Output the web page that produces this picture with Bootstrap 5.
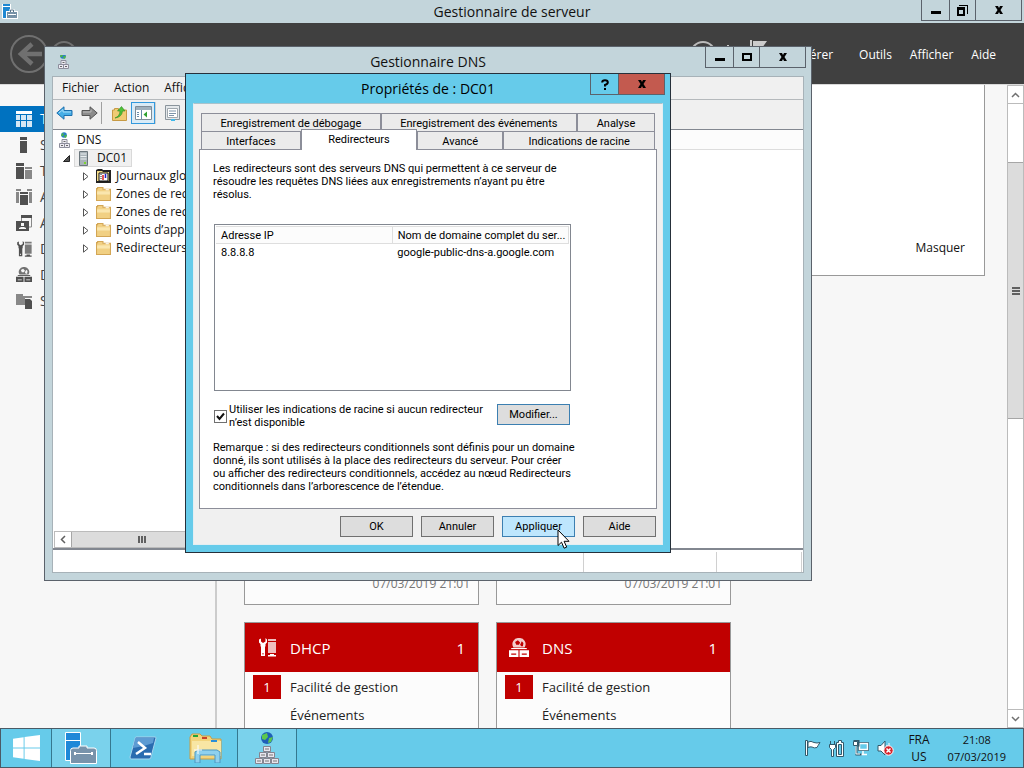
<!DOCTYPE html>
<html lang="fr">
<head>
<meta charset="utf-8">
<meta name="viewport" content="width=device-width, initial-scale=1">
<title>Gestionnaire de serveur</title>
<link href="https://cdn.jsdelivr.net/npm/bootstrap@5.3.0/dist/css/bootstrap.min.css" rel="stylesheet">
<style>
:root { --frame: #c3d5db; --sky: #66cbea; --edge: #5b626b; --rule: #828790; --face: #f0f0f0; }
body { font-family: "Open Sans", "Noto Sans", sans-serif; font-size: 12px; line-height: 18px; color: #111; background: #f7f7f7; overflow: hidden; }
button { font: inherit; color: inherit; background: none; border: 0; padding: 0; }
svg { display: block; flex: none; }
a { color: inherit; text-decoration: none; }

/* window chrome */
.titlebar { background: var(--frame); }
.titlebar .caption { font-size: 14px; line-height: 20px; }
.chrome-btns { position: absolute; top: 0; right: 2px; display: flex; border: 1px solid var(--edge); border-top: 0; }
.chrome-btns button { width: 26px; height: 20px; display: flex; align-items: center; justify-content: center; }
.chrome-btns button + button { border-left: 1px solid var(--edge); }
.chrome-btns .wide { width: 46px; }
.chrome-btns .first { width: 27px; }

/* server manager */
.sm-title { height: 23px; padding-top: 2px; }
.sm-head { height: 62px; background: #404040; color: #fff; border-bottom: 1px solid #d9d9d9; padding-right: 28px; }
.sm-tools { gap: 18px; padding-top: 2px; }
.sm-side { width: 217px; background: #f7f7f7; border-right: 2px solid #ccc; padding-top: 21px; }
.sm-side a { height: 26px; padding-left: 16px; gap: 8px; display: flex; align-items: center; font-size: 14px; color: #444; }
.sm-side a.on { background: #0072c0; color: #fff; }
.sm-main { padding: 0 22px 0 27px; background: #f7f7f7; }
.welcome { height: 191px; background: #fff; border: 1px solid #999; border-top: 0; padding: 0 19px 18px 0; }
.tile-row { gap: 17px; }
.tile { width: 235px; background: #fcfcfc; border: 1px solid #999; }
.tile-prev { height: 280px; margin: 49px 0 17px; color: #777; padding: 0 8px 11px 0; }
.tile-head { height: 49px; background: #c00000; color: #fff; font-size: 15px; padding: 0 13px 0 12px; gap: 13px; }
.tile-body { padding-top: 1px; }
.tile-line { height: 28px; font-size: 13px; color: #222; display: flex; align-items: center; padding-left: 8px; gap: 9px; }
.tile-line b { width: 28px; height: 24px; line-height: 24px; text-align: center; font-weight: 400; color: #fff; }
.tile-line b.hot { background: #c00000; }
.vbar { width: 17px; background: #fff; border: 1px solid #bbb; }
.vbar .arrow { height: 17px; display: flex; align-items: center; justify-content: center; background: #fff; }
.vbar .track { padding-top: 58px; border: solid #bbb; border-width: 1px 0; }
.vbar .thumb { height: 47%; background: #dcdcdc; border: solid #a6a6a6; border-width: 1px 0; }

/* taskbar */
.taskbar { height: 40px; background: var(--sky); border: 1px solid #4b5a66; position: relative; z-index: 5; color: #111; line-height: 17px; }
.task { width: 63px; display: flex; align-items: center; justify-content: center; }
.task.start { width: 50px; }
.task.open { width: 60px; background: #7ad2ec; border: solid #35788f; border-width: 0 1px; }
.tray { gap: 8px; padding-right: 17px; }
.clock { font-size: 11px; margin-left: 10px; }
.lang { margin-left: 6px; }

/* DNS console */
.dns { position: absolute; left: 44px; top: 46px; width: 75%; bottom: 187px; background: var(--frame); border: 1px solid var(--edge); padding: 0 7px 7px; }
.dns .titlebar { height: 29px; padding-top: 5px; }
.dns > .chrome-btns { right: 5px; }
.dns-client { background: #fff; border: 1px solid #a7b2b8; }
.dns-menu { height: 23px; background: var(--face); border-bottom: 1px solid #b5b9bc; gap: 15px; padding-left: 9px; }
.dns-tools { height: 30px; background: var(--face); border-bottom: 1px solid var(--rule); padding: 0 0 3px 3px; }
.dns-tools .sep { width: 1px; height: 22px; background: #a0a0a0; margin: 0 5px 0 3px; }
.dns-tools .sep.thin { opacity: .4; margin: 0 4px 0 0; }
.tool { width: 24px; height: 22px; display: flex; align-items: center; justify-content: center; }
.tool.on { border: 1px solid #3399dd; background: #d9ebf7; }
.tree { width: 240px; border: solid var(--rule); border-width: 0 1px 1px 0; overflow: hidden; padding: 1px 0 0 1px; white-space: nowrap; }
.node { height: 18px; display: flex; align-items: center; gap: 4px; }
.node.root { padding-left: 3px; }
.node.server { padding-left: 9px; }
.node.kid { padding-left: 29px; }
.node.kid svg + svg { margin: 0 1px 0 3px; }
.node .sel { background: #f0f0f0; border: 1px solid #d9d9d9; height: 18px; padding: 0 4px; display: flex; align-items: center; gap: 9px; }
.hbar { height: 17px; border: 1px solid #bbb; }
.hbar .arrow { width: 16px; display: flex; align-items: center; justify-content: center; }
.hbar .thumb { width: 142px; background: #dcdcdc; border: solid #a6a6a6; border-width: 0 1px; display: flex; align-items: center; justify-content: center; }
.list-head { height: 20px; background: #fcfcfc; border-bottom: 1px solid #ddd; }
.list-pane { border-bottom: 1px solid var(--rule); }
.dns-status { height: 23px; border-top: 1px solid var(--rule); padding: 2px 1px 0 0; }
.dns-status span { border-right: 1px solid #d0d0d0; }
.dns-status .cell-a { width: 133px; }
.dns-status .cell-b { width: 85px; }

/* properties dialog */
.props { position: absolute; left: 185px; top: 73px; width: 486px; background: var(--sky); border: 1px solid #26303a; padding: 0 7px 7px; font-family: Roboto, "Open Sans", sans-serif; font-size: 11px; line-height: 13px; color: #000; }
.props .titlebar { height: 29px; padding-top: 5px; background: none; font-family: "Open Sans", "Noto Sans", sans-serif; }
.props .chrome-btns { right: 5px; }
.props .close-btn { background: #c35a4f; }
.props-client { background: var(--face); border: 1px solid #e3eef2; border-top-color: #a9c3cc; padding: 9px 5px 7px; }
.tabs-line { display: flex; margin: 0 2px; }
.tabs-line button { height: 18px; border: 1px solid #8c8e99; border-bottom: 0; background: #ebebeb; flex-shrink: 0; padding-top: 1px; }
.tabs-line .on { background: #fff; height: 21px; margin: -2px 0 -1px; padding: 0 0 2px; position: relative; }
.tab-page { background: #fff; border: 1px solid #8c8e99; padding: 12px 84px 15px 13px; white-space: nowrap; }
.servers { height: 167px; border: 1px solid var(--rule); margin: 23px 1px 12px 1px; padding: 1px; }
.servers table { width: 100%; table-layout: fixed; }
.servers th { font-weight: 400; height: 17px; background: #fcfcfc; border: solid #dedede; border-width: 1px 1px 1px 0; padding: 0 5px; overflow: hidden; }
.servers td { height: 17px; padding: 0 5px; }
.tick { appearance: none; width: 13px; height: 13px; flex: none; margin: 0; border: 1px solid #707070; background: #fff url("data:image/svg+xml,%3Csvg xmlns='http://www.w3.org/2000/svg' viewBox='0 0 11 11'%3E%3Cpath d='M2 5l2.500 3L9 2.500' fill='none' stroke='%23111' stroke-width='2'/%3E%3C/svg%3E") center/11px; }
.root-hints { padding: 0 2px 0 1px; margin-bottom: 8px; }
.root-hints .choice { gap: 2px; }
.push { width: 73px; height: 21px; background: #ddd; border: 1px solid #707070; flex: none; }
.push.def { border-color: #3c7fb1; margin-top: 1px; }
.push.hot { background: #bee6fd; border-color: #3c7fb1; }
.dlg-actions { padding: 7px 1px 0 0; }
.pointer { position: absolute; left: 371px; top: 455px; }
</style>
</head>
<body class="vh-100 d-flex flex-column">

<svg width="0" height="0" class="position-absolute">
  <defs>
    <symbol id="i-min" viewBox="0 0 12 10"><path d="M1 6h10v3H1z"/></symbol>
    <symbol id="i-max" viewBox="0 0 12 10"><path d="M1 1h10v8H1zM3 3v4h6V3z" fill-rule="evenodd"/></symbol>
    <symbol id="i-x" viewBox="0 0 10 10"><path d="M1 1h3l1 2 1-2h3L6.500 5 9 9H6L5 7 4 9H1l2.500-4z"/></symbol>
    <symbol id="i-dns" viewBox="0 0 16 16">
      <circle cx="7" cy="3" r="2.800" fill="#2a7fc4"/><path d="M5 1l2 1-1 2H4zM8 3l2 0-1 3-2-1z" fill="#4cb648"/>
      <path d="M5 7.500h5v4H5zM2.500 11.500h5v4h-5zM7.500 11.500h5v4h-5z" fill="#eceaf2" stroke="#8d8e9c"/>
      <path d="M6.500 9.500h2M4 13.500h2M9 13.500h2" stroke="#666" />
    </symbol>
    <symbol id="i-folder" viewBox="0 0 14 13">
      <path d="M.5 12.500V1.500h1V.5h5v1.500h7v10.500z" fill="#f1d083" stroke="#d3a655"/><path d="M1 4h12v3H1z" fill="#fae6ae"/><path d="M9 2h3v1H9z" fill="#fff"/>
    </symbol>
    <symbol id="i-tri" viewBox="0 0 6 9"><path d="M.5.8v7.400L5 4.500z" fill="#fff" stroke="#555"/></symbol>
    <symbol id="i-tools" viewBox="0 0 18 20">
      <path d="M1 1.500v3L2.500 6v2L3 9v9h4V9l.5-1V6L9 4.500v-3L7.500 0v3.500L5 5 3 3.500V.5zM4.500 15h1v1.500h-1z" fill-rule="evenodd"/>
      <path d="M10 1h8v2h-8zM10 4h8v11h-8z" opacity=".75"/><path d="M12 16h4v1h2v1.500h-8V17h2z"/>
    </symbol>
    <symbol id="i-globe" viewBox="0 0 18 18">
      <path d="M9 0a5.500 5.500 0 0 1 5 8.500H4A5.500 5.500 0 0 1 9 0zM5.500 3.500l1 2.500h2.500l1-2-2-2zM10 6l1 1.500h1.500l.5-3-1.500-1.500z" fill-rule="evenodd" opacity=".8"/>
      <path d="M0 11h8.500v6H0zM9.500 11H18v6H9.500zM2 14v1h4.500v-1zM11.500 14v1H16v-1z" fill-rule="evenodd"/><path d="M2 9h14v1H2z"/>
    </symbol>
  </defs>
</svg>

<!-- Gestionnaire de serveur -->
<header class="titlebar sm-title position-relative text-center flex-shrink-0">
  <svg class="position-absolute top-0 start-0 mt-1" width="20" height="16" viewBox="-2 1 20 16"><path d="M.5.500h8v15h-8z" fill="#1e88d2" stroke="#fff"/><path d="M0 3h9v1H0z" fill="#fff"/><path d="M4 8h3.500V6h5v2H16v8H4z" fill="#fff"/><path d="M5 9h10v6H5z" fill="#7893a8"/><path d="M8.500 9V7h3v2M7.500 10.500v2M12.500 10.500v2" fill="none" stroke="#58748a"/><path d="M6 11.500h8" stroke="#fff"/></svg>
  <div class="caption">Gestionnaire de serveur</div>
  <div class="chrome-btns">
    <button class="first" aria-label="Réduire"><svg width="12" height="10"><use href="#i-min"/></svg></button>
    <button aria-label="Restaurer"><svg width="11" height="11" viewBox="0 0 11 11"><path d="M0 2h8v9H0zM2 5v4h4V5zM2 0h9v9h-1V1H2z" fill-rule="evenodd"/></svg></button>
    <button class="wide" aria-label="Fermer"><svg width="10" height="10"><use href="#i-x"/></svg></button>
  </div>
</header>

<div class="sm-head d-flex align-items-center flex-shrink-0 overflow-hidden">
  <svg width="90" height="60" viewBox="1 1 90 60" fill="none" stroke="#707070"><circle cx="30" cy="31" r="18" stroke-width="2"/><path d="M43 31H22M33 21L22 31l11 10" stroke-width="4.500"/><circle cx="65" cy="31" r="12" stroke-width="2"/></svg>
  <svg class="ms-auto me-4" width="90" height="60" viewBox="0 0 90 60"><circle cx="16" cy="30" r="12" fill="none" stroke="#bbb" stroke-width="2"/><path d="M40 21h2v2h-2z" fill="#ccc"/><path d="M63 16h2v28h-2zM66 17h14l-5 7 5 7H66z" fill="#ccc"/></svg>
  <nav class="d-flex sm-tools">
    <a href="#" class="me-2">Gérer</a><a href="#">Outils</a><a href="#">Afficher</a><a href="#">Aide</a>
  </nav>
</div>

<div class="d-flex flex-grow-1 overflow-hidden">
  <nav class="sm-side flex-shrink-0">
    <a href="#" class="on"><svg width="16" height="16" viewBox="0 0 16 16"><path d="M0 0h16v3H0z" fill="#fff"/><path d="M0 4h4v5H0zM5 4h5v5H5zM11 4h5v5h-5zM0 10h4v6H0zM5 10h5v6H5zM11 10h5v6h-5z" fill="#d5e8f5"/></svg>Tableau de bord</a>
    <a href="#"><svg width="16" height="16" viewBox="0 0 16 16" fill="#505050"><path d="M4 0h7v3H4zM4 4h7v12H4z"/></svg>Serveur local</a>
    <a href="#"><svg width="16" height="16" viewBox="0 0 16 16" fill="#505050"><path d="M0 0h8v3H0zM0 4h8v12H0z"/><path d="M9 4h7v2H9zM9 7h7v9H9z" fill="#888"/></svg>Tous les serveurs</a>
    <a href="#"><svg width="16" height="16" viewBox="0 0 16 16" fill="#505050"><path d="M4 3h8v2H4zM4 6h8v10H4z"/><path d="M0 0h5v2H0zM0 3h3v11H0zM11 0h5v2h-5zM13 3h3v11h-3z" fill="#888"/></svg>AD CS</a>
    <a href="#"><svg width="16" height="16" viewBox="0 0 16 16" fill="#505050"><path d="M5 0h11v3H5z"/><path d="M5.500 3v3M15.500 3v9H13" fill="none" stroke="#888"/><path d="M0 6h13v10H0zM5 8v3h3V8zM3 14h7v-1l-2-1H5l-2 1z" fill-rule="evenodd"/></svg>AD DS</a>
    <a href="#"><svg width="16" height="17" fill="#505050"><use href="#i-tools"/></svg>DHCP</a>
    <a href="#"><svg width="16" height="16" fill="#505050"><use href="#i-globe"/></svg>DNS</a>
    <a href="#" class="text-nowrap overflow-hidden"><svg width="16" height="16" viewBox="0 0 16 16" fill="#888"><path d="M0 1h7v2h9v2H9v7H0z"/><path d="M9 6h5l2 2v8H9z" fill="#505050"/></svg>Services de fichiers</a>
  </nav>

  <main class="sm-main flex-grow-1 overflow-hidden">
    <section class="welcome d-flex justify-content-end align-items-end"><a href="#">Masquer</a></section>
    <div class="d-flex tile-row">
      <div class="tile tile-prev d-flex align-items-end justify-content-end">07/03/2019 21:01</div>
      <div class="tile tile-prev d-flex align-items-end justify-content-end">07/03/2019 21:01</div>
    </div>
    <div class="d-flex tile-row">
      <section class="tile">
        <div class="tile-head d-flex align-items-center"><svg width="20" height="20" fill="#fff"><use href="#i-tools"/></svg><span>DHCP</span><span class="ms-auto">1</span></div>
        <div class="tile-body">
          <div class="tile-line"><b class="hot">1</b><a href="#">Facilité de gestion</a></div>
          <div class="tile-line"><b></b><a href="#">Événements</a></div>
        </div>
      </section>
      <section class="tile">
        <div class="tile-head d-flex align-items-center"><svg width="20" height="20" fill="#fff"><use href="#i-globe"/></svg><span>DNS</span><span class="ms-auto">1</span></div>
        <div class="tile-body">
          <div class="tile-line"><b class="hot">1</b><a href="#">Facilité de gestion</a></div>
          <div class="tile-line"><b></b><a href="#">Événements</a></div>
        </div>
      </section>
    </div>
  </main>

  <div class="vbar d-flex flex-column flex-shrink-0">
    <span class="arrow"><svg width="9" height="6" viewBox="0 0 9 6"><path d="M1 5l3.500-3.500L8 5" fill="none" stroke="#707070" stroke-width="1.500"/></svg></span>
    <div class="track flex-grow-1"><div class="thumb d-flex align-items-center justify-content-center"><svg width="8" height="8" viewBox="0 0 8 8"><path d="M0 0h8v2H0zM0 3h8v2H0zM0 6h8v2H0z" fill="#606060"/></svg></div></div>
    <span class="arrow"><svg width="9" height="6" viewBox="0 0 9 6"><path d="M1 1l3.500 3.500L8 1" fill="none" stroke="#707070" stroke-width="1.500"/></svg></span>
  </div>
</div>

<!-- Barre des tâches -->
<footer class="taskbar d-flex flex-shrink-0">
  <button class="task start" aria-label="Démarrer"><svg width="27" height="26" viewBox="0 0 28 27" fill="#fff"><path d="M0 4l11-1.600V13H0zM12 2.200L28 0v13H12zM0 14h11v10.600L0 23zM12 14h16v13l-16-2.200z"/></svg></button>
  <button class="task open" aria-label="Gestionnaire de serveur"><svg width="34" height="34" viewBox="0 0 34 34"><path d="M1.500 1.500h15v28h-15z" fill="#1e88d8" stroke="#fff"/><path d="M2 9.500h14" stroke="#fff"/><path d="M6.500 19.500q0-2.500 2.500-2.500h6v-2h8v2h7q2.500 0 2.500 2.500v13h-26z" fill="#7893ab" stroke="#fff"/><path d="M10 22.500h19" stroke="#fff"/><path d="M10 21h2v3h-2zM27 21h2v3h-2z" fill="#fff"/></svg></button>
  <button class="task" aria-label="Windows PowerShell"><svg width="28" height="24" viewBox="0 0 28 24"><path d="M7 1h19q1 0 1 1l-5 19q0 2-2 2H2q-1 0-1-2L6 3q0-2 1-2z" fill="#2a6cb0" stroke="#a8d4ee"/><path d="M7 2h18l-1 5Q14 11 4 12L6 3z" fill="#5d9bd3"/><path d="M9 6l7 6-9 6M15 18h7" fill="none" stroke="#fff" stroke-width="2.500"/></svg></button>
  <button class="task" aria-label="Explorateur de fichiers"><svg width="34" height="30" viewBox="0 0 34 30"><path d="M1 26V4l2-3h8l2 2h8l2 3h9v20z" fill="#f2d47c" stroke="#c99c44"/><path d="M3 8h29v15H3z" fill="#f8e6a4"/><path d="M4 2h5v2H4z" fill="#22a53a"/><path d="M13 4h5v2h-5z" fill="#c9432b"/><path d="M22 7h6v2h-6z" fill="#2a8fd8"/><path d="M6 30V19l3-2h19l3 2v11h-5v-8H11v8z" fill="#8ed0ee" stroke="#4c98c2"/><path d="M9 12v9M5 17h8" stroke="#fff"/></svg></button>
  <button class="task open" aria-label="DNS"><svg width="26" height="32" viewBox="0 0 26 32"><circle cx="13" cy="6" r="6" fill="#1f5fb8"/><path d="M8 3l5-2 1 4-3 3-3-1zM15 6l4-1-2 5-3 1z" fill="#5cc84c"/><g fill="#e8e6ee" stroke="#85848f"><path d="M9.500 14.500h7v5h-7zM5.500 20.500h7v5h-7zM13.500 20.500h7v5h-7zM1.500 26.500h7v5h-7zM9.500 26.500h7v5h-7zM17.500 26.500h7v5h-7z"/></g><path d="M11 17h4M7 23h4M15 23h4M3 29h4M11 29h4M19 29h4" stroke="#777"/></svg></button>
  <div class="tray d-flex align-items-center ms-auto">
    <svg width="17" height="16" viewBox="0 0 17 16"><path d="M1.500.500h2v15h-2z" fill="#fff" stroke="#31596b"/><path d="M4 2q3-1.500 6 .5 3 1 6 0-2 3-3 5-3 1-5-.5-2-.5-4 .5z" fill="#fff" stroke="#31596b"/></svg>
    <svg width="16" height="17" viewBox="0 0 16 17"><path d="M7.500 2.500h2v-2h3v2h2v14h-7z" fill="#fff" stroke="#31596b"/><path d="M9.500 4.500h3v10h-3z" fill="#66cbea" stroke="#31596b"/><path d="M.5 4.500h6v3l-2 2v7h-2v-7l-2-2zM1.500 4V1M5.500 4V1" fill="#fff" stroke="#31596b"/></svg>
    <svg width="16" height="16" viewBox="0 0 16 16"><path d="M5.500 2.500h10v8h-10z" fill="#66cbea" stroke="#31596b"/><path d="M6.500 3.500h8v6h-8zM10 11v3M7 14.500h7" fill="none" stroke="#fff" stroke-width="1.500"/><path d="M.5.500h5v5h-2v9h5" fill="none" stroke="#31596b" stroke-width="2"/><path d="M.5 1.500h4v4h-4z" fill="#fff" stroke="#31596b"/><path d="M3 6v8h4" fill="none" stroke="#fff"/></svg>
    <svg width="17" height="16" viewBox="0 0 17 16"><path d="M1 5.500h3l4-4.500v14l-4-4H1z" fill="#fff" stroke="#31596b"/><path d="M10 5v4M12 3v4" stroke="#fff"/><circle cx="11.500" cy="10.500" r="4.700" fill="#d6232b" stroke="#fff"/><path d="M9.500 8.500l4 4M13.500 8.500l-4 4" stroke="#fff" stroke-width="1.500"/></svg>
    <div class="text-center lang">FRA<br>US</div>
    <div class="text-center clock">21:08<br>07/03/2019</div>
  </div>
</footer>

<!-- Gestionnaire DNS -->
<section class="dns d-flex flex-column">
  <div class="titlebar position-relative text-center flex-shrink-0">
    <svg class="position-absolute top-0 start-0 mt-2" width="26" height="16" viewBox="-4 2 26 16"><use href="#i-dns" width="16" height="16"/></svg>
    <div class="caption">Gestionnaire DNS</div>
  </div>
  <div class="chrome-btns">
    <button class="first" aria-label="Réduire"><svg width="12" height="10"><use href="#i-min"/></svg></button>
    <button aria-label="Agrandir"><svg width="12" height="10"><use href="#i-max"/></svg></button>
    <button class="wide" aria-label="Fermer"><svg width="10" height="10"><use href="#i-x"/></svg></button>
  </div>
  <div class="dns-client flex-grow-1 d-flex flex-column overflow-hidden">
    <nav class="dns-menu d-flex align-items-center"><button>Fichier</button><button>Action</button><button>Affichage</button></nav>
    <div class="dns-tools d-flex align-items-center">
      <svg class="me-2" width="17" height="14" viewBox="0 0 17 14"><path d="M.8 7L8 .8v3.700h8v5H8v3.700z" fill="#46aee6" stroke="#1c6fae"/><path d="M3 7l4-3.500V6h8" fill="none" stroke="#a5dcf7"/></svg>
      <svg width="17" height="14" viewBox="0 0 17 14"><path d="M16.200 7L9 .8v3.700H1v5h8v3.700z" fill="#8c8c8c" stroke="#555"/><path d="M2 6h8V3.500" fill="none" stroke="#bbb"/></svg>
      <span class="sep"></span>
      <button class="tool" aria-label="Dossier parent"><svg width="15" height="15" viewBox="0 0 15 15"><path d="M.5 14.500V4h2V2.500h4V4h8v10.500z" fill="#f0cb74" stroke="#c79a44"/><path d="M3 12q5-2 5-7H5.500L9.500.500 13 5h-2.500Q10 11 3 12z" fill="#4fc138" stroke="#2f8a22" stroke-width=".6"/></svg></button>
      <button class="tool on" aria-label="Arborescence de la console"><svg width="17" height="14" viewBox="0 0 17 14"><path d="M.5.500h16v13H.5z" fill="#fff" stroke="#7f8c98"/><path d="M1 1h15v3H1z" fill="#9fb0bd"/><path d="M6.500 4v9M2 6.500h2M2 8.500h2M2 10.500h2" stroke="#6a8bab"/><path d="M12 5.500v6L8.500 8.500z" fill="#2fa12f"/></svg></button>
      <span class="sep thin"></span>
      <button class="tool" aria-label="Propriétés"><svg width="15" height="17" viewBox="0 0 15 17"><path d="M.5.500h14v14H.5z" fill="#e4e8eb" stroke="#8a949c"/><path d="M2.500 3.500h10v9h-10z" fill="#fff" stroke="#a0a8ae"/><path d="M4 6h7M4 8.500h7M4 10.500h5" stroke="#7d94aa"/><path d="M6 14h4v2H6z" fill="#3fb8ea"/></svg></button>
    </div>
    <div class="d-flex flex-grow-1">
      <div class="tree d-flex flex-column flex-shrink-0">
        <div class="node root"><svg width="16" height="16"><use href="#i-dns"/></svg><span>DNS</span></div>
        <div class="node server"><svg width="7" height="7" viewBox="0 0 7 7"><path d="M6.500.500v6h-6z" fill="#555" stroke="#222"/></svg>
          <span class="sel"><svg width="9" height="15" viewBox="0 0 9 15"><path d="M.5.500h8v14h-8z" fill="#a9b3b8" stroke="#6b767c"/><path d="M1.500 3h6M1.500 5.500h6M1.500 8h6" stroke="#e9eef0"/><path d="M5 11h2v2H5z" fill="#7bd52e"/></svg>DC01</span></div>
        <div class="node kid"><svg width="6" height="9"><use href="#i-tri"/></svg><svg width="15" height="14" viewBox="0 0 15 14"><path d="M0 14V1l2-1h4l1 1h8v13z" fill="#222"/><path d="M1 12V2h5l1 1h6v9z" fill="#f5dd8a"/><path d="M3 4h9v8H3z" fill="#fff" stroke="#111"/><path d="M5 5v6" stroke="#222" stroke-dasharray="1 1"/><path d="M7 6v5" stroke="#d22" stroke-width="1.500"/><path d="M9.500 5v4" stroke="#22c" stroke-width="1.500"/></svg>Journaux globaux</div>
        <div class="node kid"><svg width="6" height="9"><use href="#i-tri"/></svg><svg width="15" height="14"><use href="#i-folder"/></svg>Zones de recherche directes</div>
        <div class="node kid"><svg width="6" height="9"><use href="#i-tri"/></svg><svg width="15" height="14"><use href="#i-folder"/></svg>Zones de recherche inversée</div>
        <div class="node kid"><svg width="6" height="9"><use href="#i-tri"/></svg><svg width="15" height="14"><use href="#i-folder"/></svg>Points d’approbation</div>
        <div class="node kid"><svg width="6" height="9"><use href="#i-tri"/></svg><svg width="15" height="14"><use href="#i-folder"/></svg>Redirecteurs conditionnels</div>
        <div class="hbar d-flex mt-auto">
          <span class="arrow"><svg width="6" height="9" viewBox="0 0 6 9"><path d="M5 1L1.500 4.500 5 8" fill="none" stroke="#606060" stroke-width="1.500"/></svg></span>
          <span class="thumb"><svg width="8" height="7" viewBox="0 0 8 7"><path d="M0 0h2v7H0zM3 0h2v7H3zM6 0h2v7H6z" fill="#606060"/></svg></span>
        </div>
      </div>
      <div class="flex-grow-1 list-pane"><div class="list-head"></div></div>
    </div>
    <div class="dns-status d-flex justify-content-end flex-shrink-0"><span class="flex-grow-1"></span><span class="cell-a"></span><span class="cell-b"></span></div>
  </div>
</section>

<!-- Propriétés de DC01 -->
<section class="props" role="dialog" aria-label="Propriétés de : DC01">
  <div class="titlebar text-center"><div class="caption">Propriétés de : DC01</div></div>
  <div class="chrome-btns">
    <button class="first" aria-label="Aide contextuelle"><svg width="8" height="11" viewBox="0 0 8 11"><path d="M1.200 3.500Q1.200 1.200 4 1.200T6.800 3.500Q6.800 5 4 6v1.500" fill="none" stroke="#000" stroke-width="2"/><path d="M3 9h2v2H3z"/></svg></button>
    <button class="wide close-btn" aria-label="Fermer"><svg width="10" height="10"><use href="#i-x"/></svg></button>
  </div>
  <div class="props-client">
    <div class="tabs-line" role="tablist">
      <button role="tab" style="flex-basis:39.6%">Enregistrement de débogage</button><button role="tab" style="flex-basis:43.200%">Enregistrement des événements</button><button role="tab" style="flex-basis:17.200%">Analyse</button>
    </div>
    <div class="tabs-line" role="tablist">
      <button role="tab" style="flex-basis:22%">Interfaces</button><button role="tab" class="on" aria-selected="true" style="flex-basis:25.600%">Redirecteurs</button><button role="tab" style="flex-basis:19%">Avancé</button><button role="tab" style="flex-basis:33.400%">Indications de racine</button>
    </div>
    <div class="tab-page">
      <p class="mb-0">Les redirecteurs sont des serveurs DNS qui permettent à ce serveur de<br>résoudre les requêtes DNS liées aux enregistrements n’ayant pu être<br>résolus.</p>
      <div class="servers">
        <table>
          <thead><tr><th>Adresse IP</th><th>Nom de domaine complet du ser...</th></tr></thead>
          <tbody><tr><td>8.8.8.8</td><td>google-public-dns-a.google.com</td></tr></tbody>
        </table>
      </div>
      <div class="d-flex justify-content-between root-hints">
        <div class="d-flex align-items-center choice"><input class="tick" type="checkbox" id="racine" checked><label for="racine">Utiliser les indications de racine si aucun redirecteur<br>n’est disponible</label></div>
        <button class="push def">Modifier...</button>
      </div>
      <p class="mb-0 pt-1">Remarque : si des redirecteurs conditionnels sont définis pour un domaine<br>donné, ils sont utilisés à la place des redirecteurs du serveur. Pour créer<br>ou afficher des redirecteurs conditionnels, accédez au nœud Redirecteurs<br>conditionnels dans l’arborescence de l’étendue.</p>
    </div>
    <div class="d-flex justify-content-end gap-2 dlg-actions">
      <button class="push">OK</button><button class="push">Annuler</button><button class="push hot">Appliquer</button><button class="push">Aide</button>
    </div>
  </div>
  <svg class="pointer" width="13" height="21" viewBox="0 0 13 21"><path d="M1 1v15.500l3.500-3.300 2.600 6 2.600-1.100-2.600-5.800H12z" fill="#fff" stroke="#000"/></svg>
</section>

<script src="https://cdn.jsdelivr.net/npm/bootstrap@5.3.0/dist/js/bootstrap.bundle.min.js"></script>
</body>
</html>
